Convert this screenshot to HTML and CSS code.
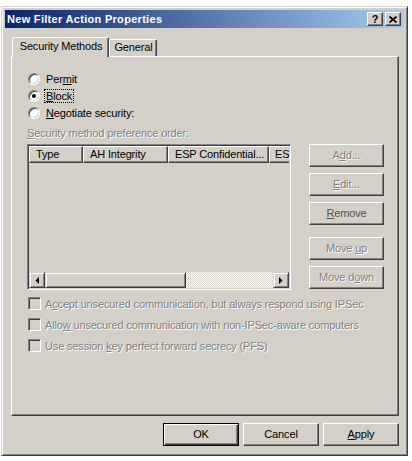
FILE: index.html
```html
<!DOCTYPE html>
<html>
<head>
<meta charset="utf-8">
<title>New Filter Action Properties</title>
<link rel="stylesheet" href="styles.css">
</head>
<body>
<div class="window">
  <div class="titlebar">
    <span class="title">New Filter Action Properties</span>
    <div class="caption-btns">
      <span class="cbtn help">?</span>
      <span class="cbtn close"><svg width="8" height="7" viewBox="0 0 8 7"><path d="M0.5 0.5 L7.5 6.5 M7.5 0.5 L0.5 6.5" stroke="#000" stroke-width="1.7" fill="none"/></svg></span>
    </div>
  </div>
  <div class="content">
    <div class="tabs">
      <div class="tab active">Security Methods</div>
      <div class="tab">General</div>
    </div>
    <div class="panel">
      <div class="radios">
        <div class="radio"><span class="rb"></span><span class="lbl">Per<u>m</u>it</span></div>
        <div class="radio"><span class="rb checked"></span><span class="lbl focus"><u>B</u>lock</span></div>
        <div class="radio"><span class="rb"></span><span class="lbl"><u>N</u>egotiate security:</span></div>
      </div>
      <div class="caption disabled"><u>S</u>ecurity method preference order:</div>
      <div class="listrow">
        <div class="listview">
          <div class="lv-header">
            <div class="col c1">Type</div>
            <div class="col c2">AH Integrity</div>
            <div class="col c3">ESP Confidential...</div>
            <div class="col c4">ES</div>
          </div>
          <div class="lv-body"></div>
          <div class="hscroll">
            <div class="sbtn"><svg width="4" height="7" viewBox="0 0 4 7"><path d="M4 0 L0.5 3.5 L4 7 Z" fill="#000"/></svg></div>
            <div class="thumb"></div>
            <div class="track"></div>
            <div class="sbtn"><svg width="4" height="7" viewBox="0 0 4 7"><path d="M0 0 L3.5 3.5 L0 7 Z" fill="#000"/></svg></div>
          </div>
        </div>
        <div class="side-btns">
          <div class="btn disabled"><span>A<u>d</u>d...</span></div>
          <div class="btn disabled"><span><u>E</u>dit...</span></div>
          <div class="btn semi"><span><u>R</u>emove</span></div>
          <div class="btn disabled gap"><span>Move <u>u</u>p</span></div>
          <div class="btn disabled"><span>Move d<u>o</u>wn</span></div>
        </div>
      </div>
      <div class="checks">
        <div class="check"><span class="cb"></span><span class="clbl disabled">A<u>c</u>cept unsecured communication, but always respond using IPSec</span></div>
        <div class="check"><span class="cb"></span><span class="clbl disabled">Allo<u>w</u> unsecured communication with non-IPSec-aware computers</span></div>
        <div class="check"><span class="cb"></span><span class="clbl disabled">Use session <u>k</u>ey perfect forward secrecy (PFS)</span></div>
      </div>
    </div>
    <div class="footer">
      <div class="btn fbtn default"><span>OK</span></div>
      <div class="btn fbtn"><span>Cancel</span></div>
      <div class="btn fbtn"><span><u>A</u>pply</span></div>
    </div>
  </div>
</div>
</body>
</html>
```
FILE: styles.css
```css
* { box-sizing: border-box; }
html, body { margin: 0; padding: 0; }
body {
  background: #ffffff;
  font-family: "Liberation Sans", Arial, sans-serif;
  font-size: 11px;
  letter-spacing: -0.15px;
  color: #000;
}
.window {
  margin: 6px 0 0 1px;
  width: 407px;
  height: 450px;
  background: #d4d0c8;
  border: 1px solid;
  border-color: #d4d0c8 #404040 #404040 #d4d0c8;
  box-shadow: inset 1px 1px #fff, inset -1px -1px #808080;
  padding: 3px;
  display: flex;
  flex-direction: column;
}
.titlebar {
  height: 18px;
  flex: none;
  display: flex;
  align-items: center;
  padding: 0 3px 0 2px;
  background: linear-gradient(to right, #0a246a, #a6caf0);
  color: #fff;
  font-weight: bold;
}
.title { line-height: 18px; letter-spacing: 0.3px; }
.caption-btns { margin-left: auto; display: flex; gap: 2px; }
.cbtn {
  width: 16px;
  height: 14px;
  background: #d4d0c8;
  border: 1px solid;
  border-color: #fff #404040 #404040 #fff;
  box-shadow: inset -1px -1px #808080;
  display: flex;
  align-items: center;
  justify-content: center;
  color: #000;
  font-weight: bold;
  font-size: 11px;
  line-height: 12px;
  letter-spacing: 0;
}
.content {
  flex: 1;
  display: flex;
  flex-direction: column;
  padding: 9px 4px 6px 6px;
}
.tabs {
  height: 19px;
  display: flex;
  align-items: flex-end;
  padding-left: 1px;
}
.tab {
  height: 17px;
  width: 48px;
  background: #d4d0c8;
  border-top: 1px solid #fff;
  border-left: 1px solid #fff;
  border-right: 1px solid #404040;
  box-shadow: inset -1px 0 #808080;
  border-radius: 2px 2px 0 0;
  text-align: center;
  line-height: 15px;
  padding-left: 1px;
}
.tab.active {
  width: 97px;
  height: 20px;
  margin-bottom: -1px;
  position: relative;
  z-index: 1;
  line-height: 17px;
}
.panel {
  width: 388px;
  height: 360px;
  border: 1px solid;
  border-color: #fff #404040 #404040 #fff;
  box-shadow: inset -1px -1px #808080;
  padding: 13px 0 0 15px;
}
.radio {
  height: 17px;
  display: flex;
  align-items: center;
}
.rb {
  width: 12px;
  height: 12px;
  margin-left: 1px;
  border-radius: 50%;
  background: #fff;
  border: 1px solid;
  border-color: #808080 #fff #fff #808080;
  box-shadow: inset 1px 1px #404040, inset -1px -1px #d4d0c8;
  display: flex;
  align-items: center;
  justify-content: center;
}
.rb.checked::after {
  content: "";
  width: 4px;
  height: 4px;
  border-radius: 50%;
  background: #000;
}
.lbl {
  margin-left: 4px;
  padding: 0 1px;
  border: 1px solid transparent;
  line-height: 12px;
}
.lbl.focus { border: 1px dotted #000; }
.disabled {
  color: #808080;
  text-shadow: 1px 1px 0 #fff;
}
.caption {
  margin-top: 6px;
  height: 13px;
  line-height: 13px;
}
.listrow {
  margin-top: 4px;
  display: flex;
}
.listview {
  width: 264px;
  height: 146px;
  border: 1px solid;
  border-color: #808080 #fff #fff #808080;
  box-shadow: inset 1px 1px #404040, inset -1px -1px #d4d0c8;
  padding: 1px;
  display: flex;
  flex-direction: column;
  overflow: hidden;
}
.lv-header { display: flex; height: 17px; flex: none; }
.col {
  height: 17px;
  border: 1px solid;
  border-color: #fff #404040 #404040 #fff;
  box-shadow: inset -1px -1px #808080;
  padding-left: 6px;
  line-height: 14px;
  white-space: nowrap;
  overflow: hidden;
}
.c1 { width: 54px; }
.c2 { width: 85px; }
.c3 { width: 101px; }
.c4 { flex: 1; padding-left: 5px; border-right: none; box-shadow: inset 0 -1px #808080; }
.lv-body { flex: 1; }
.hscroll { height: 16px; display: flex; flex: none; }
.sbtn, .thumb {
  height: 16px;
  border: 1px solid;
  border-color: #d4d0c8 #404040 #404040 #d4d0c8;
  box-shadow: inset 1px 1px #fff, inset -1px -1px #808080;
  background: #d4d0c8;
}
.sbtn {
  width: 16px;
  display: flex;
  align-items: center;
  justify-content: center;
}
.thumb { width: 141px; }
.track {
  flex: 1;
  background: repeating-conic-gradient(#ffffff 0 25%, #d4d0c8 0 50%) 0 0 / 2px 2px;
}
.side-btns {
  margin-left: 18px;
  width: 75px;
  display: flex;
  flex-direction: column;
  gap: 6px;
}
.btn {
  height: 23px;
  background: #d4d0c8;
  border: 1px solid;
  border-color: #fff #404040 #404040 #fff;
  box-shadow: inset -1px -1px #808080;
  display: flex;
  align-items: center;
  justify-content: center;
  line-height: 13px;
  white-space: pre;
}
.btn.gap { margin-top: 6px; }
.btn.semi { color: #505050; }
.checks { margin-top: 3px; }
.check {
  height: 21px;
  display: flex;
  align-items: center;
}
.cb {
  width: 13px;
  height: 13px;
  margin-left: 1px;
  background: #d4d0c8;
  border: 1px solid;
  border-color: #808080 #fff #fff #808080;
  box-shadow: inset 1px 1px #404040, inset -1px -1px #d4d0c8;
}
.clbl { margin-left: 4px; }
.footer {
  margin-top: 7px;
  display: flex;
  justify-content: flex-end;
  gap: 4px;
  padding-right: 1px;
}
.fbtn { width: 76px; }
.btn.default {
  border-color: #000;
  box-shadow: inset 1px 1px #fff, inset -1px -1px #404040, inset -2px -2px #808080;
}
```
